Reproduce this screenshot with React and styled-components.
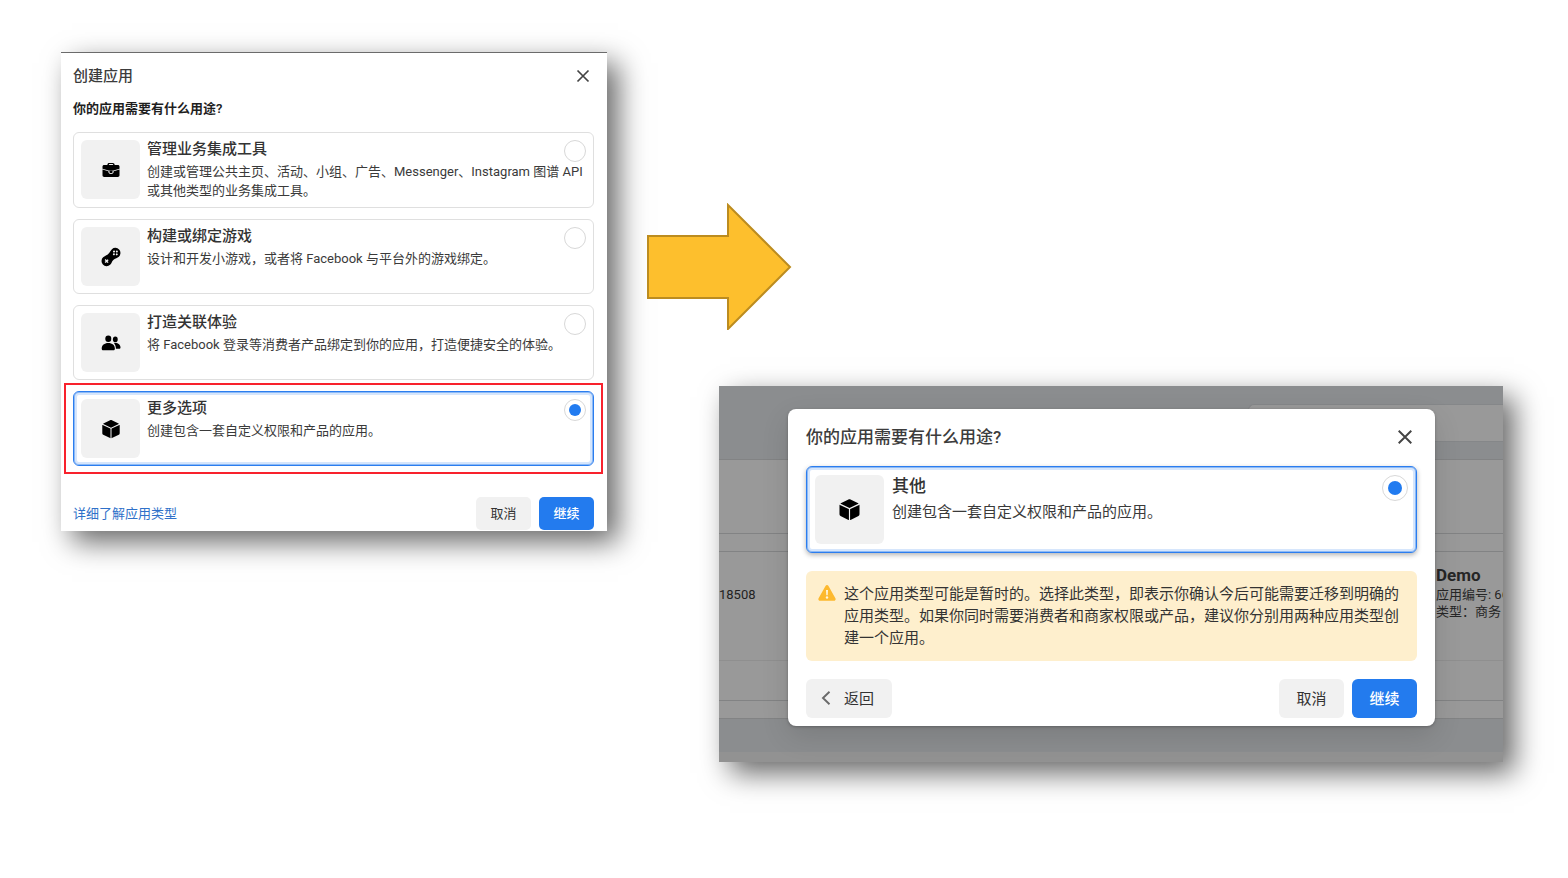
import React from 'react';
import styled, { createGlobalStyle, css } from 'styled-components';

const GlobalStyle = createGlobalStyle`
  *, *::before, *::after {
    box-sizing: border-box;
  }

  body {
    margin: 0;
    background: #fff;
    color: #333;
    font-family: Roboto, "Noto Sans CJK SC", sans-serif;
  }

  h2, h3, p, fieldset {
    margin: 0;
  }

  button {
    font-family: inherit;
  }
`;

const Page = styled.main`
  display: grid;
  grid-template-columns: minmax(0, 546fr) minmax(0, 856fr);
  align-items: start;
  gap: 40px;
  padding: 52px 65px 52px 61px;
`;

const liftedShadow = css`
  box-shadow: 11px 11px 27px rgba(0, 0, 0, 0.6);
`;

const FirstStep = styled.section`
  padding: 13px 13px 1px 12px;
  border-top: 1px solid #6b6b6b;
  background: #fff;
  ${liftedShadow}
`;

const Flow = styled.div`
  display: flex;
  flex-direction: column;
  gap: 56px;
  padding-top: 151px;
`;

const Arrow = styled.svg`
  display: block;
  width: 145px;
  height: 127px;
`;

const SecondFrame = styled.div`
  margin-left: 72px;
  ${liftedShadow}
`;

const SecondStep = styled.section`
  display: grid;
  overflow: hidden;
`;

const DialogHeader = styled.header`
  display: flex;
  align-items: center;
  justify-content: space-between;
`;

const Title = styled.h2`
  font-size: ${(p) => (p.$large ? 17 : 15)}px;
  line-height: ${(p) => (p.$large ? 22 : 20)}px;
  font-weight: 500;
  color: #3c3c3c;
`;

const Question = styled.h3`
  margin: 14px 0;
  font-size: 13px;
  line-height: 18px;
  font-weight: 600;
  color: #1f1f1f;
`;

const CloseButton = styled.button`
  display: flex;
  padding: 0 4px;
  border: 0;
  background: none;
  color: #444;
  cursor: pointer;
`;

const OptionList = styled.fieldset`
  display: grid;
  gap: 11px;
  min-width: 0;
  padding: 0;
  border: 0;
`;

const OptionCard = styled.label`
  position: relative;
  display: grid;
  grid-template-columns: auto minmax(0, 1fr) auto;
  grid-template-rows: auto 1fr;
  column-gap: ${(p) => (p.$large ? 8 : 7)}px;
  padding: ${(p) => (p.$large ? 8 : 7)}px;
  border: 1px solid ${(p) => (p.$selected ? '#2b7def' : '#dfdfdf')};
  border-radius: 6px;
  background: #fff;
  cursor: pointer;
  ${(p) =>
    p.$selected &&
    css`
      box-shadow: inset 0 0 0 1px #8dbaf6, inset 0 0 0 3px #d6e6fc${p.$large ? ', 0 2px 5px rgba(0, 0, 0, 0.3)' : ''};
    `}
  ${(p) =>
    p.$marked &&
    css`
      &::after {
        content: '';
        position: absolute;
        inset: -9px -10px;
        border: 2px solid #f8222d;
      }
    `}
`;

const IconTile = styled.span`
  grid-row: 1 / 3;
  display: flex;
  align-items: center;
  justify-content: center;
  width: ${(p) => (p.$large ? 69 : 59)}px;
  height: ${(p) => (p.$large ? 69 : 59)}px;
  border-radius: 6px;
  background: #f1f1f1;
`;

const OptionTitle = styled.span`
  font-size: ${(p) => (p.$large ? 17 : 15)}px;
  line-height: ${(p) => (p.$large ? 22 : 18)}px;
  font-weight: 500;
  color: #333;
`;

const OptionText = styled.span`
  grid-column: 2 / 4;
  font-size: ${(p) => (p.$large ? 15 : 13)}px;
  line-height: ${(p) => (p.$large ? 22 : 19)}px;
  color: #3a3a3a;
`;

const Radio = styled.input`
  appearance: none;
  display: grid;
  place-items: center;
  width: ${(p) => (p.$large ? 26 : 22)}px;
  height: ${(p) => (p.$large ? 26 : 22)}px;
  margin: 0;
  border: 1px solid #d8d8d8;
  border-radius: 50%;
  background: #fff;

  &:checked::before {
    content: '';
    width: ${(p) => (p.$large ? 14 : 12)}px;
    height: ${(p) => (p.$large ? 14 : 12)}px;
    border-radius: 50%;
    background: #217bf0;
  }
`;

const Footer = styled.footer`
  display: flex;
  align-items: center;
  gap: 8px;
  margin-top: ${(p) => (p.$large ? 18 : 31)}px;
`;

const LearnMore = styled.a`
  margin-right: auto;
  font-size: 13px;
  line-height: 18px;
  color: #2f71c9;
  text-decoration: none;
`;

const Button = styled.button`
  display: flex;
  align-items: center;
  justify-content: center;
  min-width: ${(p) => (p.$large ? 65 : 55)}px;
  height: ${(p) => (p.$large ? 39 : 33)}px;
  padding: 0 0 2px;
  border: 0;
  border-radius: ${(p) => (p.$large ? 6 : 5)}px;
  background: ${(p) => (p.$primary ? '#237bee' : '#f1f1f1')};
  color: ${(p) => (p.$primary ? '#fff' : '#333')};
  font-size: ${(p) => (p.$large ? 15 : 13)}px;
  font-weight: ${(p) => (p.$primary ? 500 : 400)};
  cursor: pointer;
`;

const BackButton = styled(Button)`
  gap: 12px;
  margin-right: auto;
  padding: 0 18px 2px 14px;
`;

const Backdrop = styled.div`
  grid-area: 1 / 1;
  min-width: 0;
  background: #8b8d8f;
`;

const SearchRow = styled.div`
  display: flex;
  justify-content: flex-end;
  height: 73px;
  padding: 18px 0 17px;
`;

const SearchField = styled.div`
  width: 255px;
  border: 1px solid #858789;
  border-right: 0;
  border-radius: 6px 0 0 6px;
  background: #999;
`;

const BackdropRow = styled.div`
  display: flex;
  justify-content: space-between;
  height: ${(p) => p.$height}px;
  border-top: 1px solid ${(p) => (p.$soft ? '#8f8f8f' : '#828384')};
  background: #999;
  overflow: hidden;
`;

const BackdropEdge = styled.div`
  height: 44px;
  border-top: 1px solid #828384;
  border-bottom: 10px solid #929292;
`;

const AppNumber = styled.span`
  padding-top: 34px;
  font-size: 13px;
  line-height: 18px;
  color: #222;
`;

const AppSummary = styled.div`
  width: 67px;
  padding-top: 12px;
  font-size: 13px;
  line-height: 17px;
  color: #262626;
  white-space: nowrap;
`;

const AppName = styled.h3`
  font-size: 17px;
  line-height: 22px;
  font-weight: 700;
`;

const Dialog = styled.div`
  grid-area: 1 / 1;
  position: relative;
  align-self: start;
  margin: 23px 68px 0 69px;
  padding: 17px 18px 8px;
  border-radius: 8px;
  background: #fff;
  box-shadow: 0 10px 28px rgba(0, 0, 0, 0.12), 0 1px 3px rgba(0, 0, 0, 0.25);

  ${OptionList} {
    margin-top: 18px;
  }
`;

const Notice = styled.div`
  display: flex;
  align-items: flex-start;
  gap: 8px;
  margin-top: 18px;
  padding: 12px 15px 12px 12px;
  border-radius: 6px;
  background: #feefcd;
  font-size: 15px;
  line-height: 22px;
  color: #333;

  svg {
    flex: none;
    margin-top: 1px;
  }
`;

const CloseIcon = ({ size }) => (
  <svg width={size} height={size} viewBox="0 0 14 14" aria-hidden="true">
    <path d="M1.5 1.5l11 11M12.5 1.5l-11 11" stroke="currentColor" strokeWidth="1.7" />
  </svg>
);

const BriefcaseIcon = () => (
  <svg width="20" height="20" viewBox="0 0 20 20" aria-hidden="true">
    <path
      d="M6.4 5V4.6c0-1 .8-1.7 1.7-1.7h3.8c1 0 1.7.8 1.7 1.7V5h3.2c1 0 1.7.7 1.7 1.6v2.2l-6 1.7H7.500L1.5 8.800V6.600C1.500 5.700 2.200 5 3.200 5zM7.800 5h4.400c0-.6-.3-.9-.8-.9H8.600c-.5 0-.8.3-.8.9z"
      fillRule="evenodd"
    />
    <path d="M1.500 9.600l5.900 1.700v.8c0 1.200 1.100 2 2.600 2s2.600-.8 2.600-2v-.8l5.900-1.700v5.700c0 1-.7 1.700-1.700 1.700H3.200c-1 0-1.700-.7-1.700-1.700z" />
    <path d="M8.500 10.500h3v1.700c0 .5-.5.900-1.500.9s-1.500-.4-1.500-.9z" />
  </svg>
);

const GamepadIcon = () => (
  <svg width="22" height="22" viewBox="0 0 22 22" aria-hidden="true">
    <g transform="rotate(-43 11 11)">
      <path d="M5 5.900a5.100 5.100 0 0 0 0 10.200c2.200 0 3.300-1.300 6-1.300s3.800 1.300 6 1.300a5.100 5.100 0 0 0 0-10.200c-2.200 0-3.300 1-6 1s-3.800-1-6-1z" />
      <path d="M5 8.900v4.200M2.900 11h4.200" stroke="#f1f1f1" strokeWidth="1.400" />
      <g fill="#f1f1f1">
        <circle cx="17" cy="9" r="1" />
        <circle cx="17" cy="13" r="1" />
        <circle cx="15" cy="11" r="1" />
        <circle cx="19" cy="11" r="1" />
      </g>
    </g>
  </svg>
);

const PeopleIcon = () => (
  <svg width="20" height="20" viewBox="0 0 20 20" aria-hidden="true">
    <ellipse cx="7.300" cy="5.700" rx="3" ry="3.300" />
    <ellipse cx="14.300" cy="6.400" rx="2.400" ry="2.800" />
    <path d="M.7 15.500c0-3.400 2.700-5.600 6.600-5.600s6.600 2.200 6.600 5.600c0 1.300-.6 1.800-1.700 1.800H2.400c-1.100 0-1.700-.5-1.700-1.800z" />
    <path d="M13 10.200c3.900-.6 6.500 1.600 6.500 4.200 0 .9-.5 1.400-1.400 1.400h-3.200c0-2.300-.6-4-1.900-5.600z" />
  </svg>
);

const CubeIcon = ({ size = 20 }) => (
  <svg width={size} height={size} viewBox="0 0 20 20" aria-hidden="true">
    <path d="M9.100 1.300c.6-.3 1.200-.3 1.800 0l6.700 3.300c.2.100.3.300.1.400L10 8.700 2.300 5c-.2-.1-.1-.3.100-.4z" />
    <path d="M1.700 6c-.2-.1-.4 0-.4.200v8c0 .7.300 1.200.9 1.500l6.900 3.400c.2.100.4 0 .4-.2V9.900c0-.1-.1-.2-.2-.3z" />
    <path d="M18.300 6c.2-.1.400 0 .4.200v8c0 .7-.3 1.200-.9 1.500l-6.900 3.400c-.2.100-.4 0-.4-.2V9.900c0-.1.100-.2.200-.3z" />
  </svg>
);

const WarningIcon = () => (
  <svg width="18" height="18" viewBox="0 0 18 18" aria-hidden="true">
    <path
      d="M7.500 2c.7-1.200 2.300-1.200 3 0l6.900 12.300c.7 1.200-.1 2.400-1.300 2.400H1.900C.7 16.700-.1 15.500.6 14.300z"
      fill="#fdb92e"
    />
    <path d="M8 6h2l-.3 5.200H8.300z" fill="#fff6df" />
    <circle cx="9" cy="13.500" r="1.200" fill="#fff6df" />
  </svg>
);

const ChevronIcon = () => (
  <svg width="12" height="16" viewBox="0 0 12 16" aria-hidden="true">
    <path d="M9.500 1.800L3 8l6.500 6.200" fill="none" stroke="#6a6a6a" strokeWidth="1.900" />
  </svg>
);

const options = [
  {
    id: 'business',
    icon: <BriefcaseIcon />,
    title: '管理业务集成工具',
    text: '创建或管理公共主页、活动、小组、广告、Messenger、Instagram 图谱 API 或其他类型的业务集成工具。',
  },
  {
    id: 'game',
    icon: <GamepadIcon />,
    title: '构建或绑定游戏',
    text: '设计和开发小游戏，或者将 Facebook 与平台外的游戏绑定。',
  },
  {
    id: 'consumer',
    icon: <PeopleIcon />,
    title: '打造关联体验',
    text: '将 Facebook 登录等消费者产品绑定到你的应用，打造便捷安全的体验。',
  },
  {
    id: 'more',
    icon: <CubeIcon />,
    title: '更多选项',
    text: '创建包含一套自定义权限和产品的应用。',
    selected: true,
  },
];

const Option = ({ name, icon, title, text, selected, large, marked }) => (
  <OptionCard $selected={selected} $large={large} $marked={marked}>
    <IconTile $large={large}>{icon}</IconTile>
    <OptionTitle $large={large}>{title}</OptionTitle>
    <Radio type="radio" name={name} defaultChecked={selected} $large={large} />
    <OptionText $large={large}>{text}</OptionText>
  </OptionCard>
);

const App = () => {
  return (
    <>
      <GlobalStyle />
      <Page>
        <FirstStep>
          <DialogHeader>
            <Title>创建应用</Title>
            <CloseButton aria-label="关闭">
              <CloseIcon size={14} />
            </CloseButton>
          </DialogHeader>
          <Question>你的应用需要有什么用途?</Question>
          <OptionList>
            {options.map(({ id, ...option }) => (
              <Option key={id} name="app-type" marked={option.selected} {...option} />
            ))}
          </OptionList>
          <Footer>
            <LearnMore href="#app-types">详细了解应用类型</LearnMore>
            <Button>取消</Button>
            <Button $primary>继续</Button>
          </Footer>
        </FirstStep>

        <Flow>
          <Arrow viewBox="0 0 145 127" aria-hidden="true">
            <path
              d="M1 33h80V2l62 62-62 62V95H1z"
              fill="#fdbf2d"
              stroke="#bc8c1f"
              strokeWidth="2"
            />
          </Arrow>

          <SecondFrame>
            <SecondStep>
              <Backdrop>
                <SearchRow>
                  <SearchField />
                </SearchRow>
                <BackdropRow $height={74} />
                <BackdropRow $height={18} />
                <BackdropRow $height={109}>
                  <AppNumber>18508</AppNumber>
                  <AppSummary>
                    <AppName>Demo</AppName>
                    <p>应用编号: 66</p>
                    <p>类型：商务</p>
                  </AppSummary>
                </BackdropRow>
                <BackdropRow $height={40} $soft />
                <BackdropRow $height={18} />
                <BackdropEdge />
              </Backdrop>

              <Dialog>
                <DialogHeader>
                  <Title $large>你的应用需要有什么用途?</Title>
                  <CloseButton aria-label="关闭">
                    <CloseIcon size={16} />
                  </CloseButton>
                </DialogHeader>
                <OptionList>
                  <Option
                    large
                    selected
                    name="other-type"
                    icon={<CubeIcon size={23} />}
                    title="其他"
                    text="创建包含一套自定义权限和产品的应用。"
                  />
                </OptionList>
                <Notice>
                  <WarningIcon />
                  <p>
                    这个应用类型可能是暂时的。选择此类型，即表示你确认今后可能需要迁移到明确的应用类型。如果你同时需要消费者和商家权限或产品，建议你分别用两种应用类型创建一个应用。
                  </p>
                </Notice>
                <Footer $large>
                  <BackButton $large>
                    <ChevronIcon />
                    返回
                  </BackButton>
                  <Button $large>取消</Button>
                  <Button $large $primary>
                    继续
                  </Button>
                </Footer>
              </Dialog>
            </SecondStep>
          </SecondFrame>
        </Flow>
      </Page>
    </>
  );
};

export default App;
